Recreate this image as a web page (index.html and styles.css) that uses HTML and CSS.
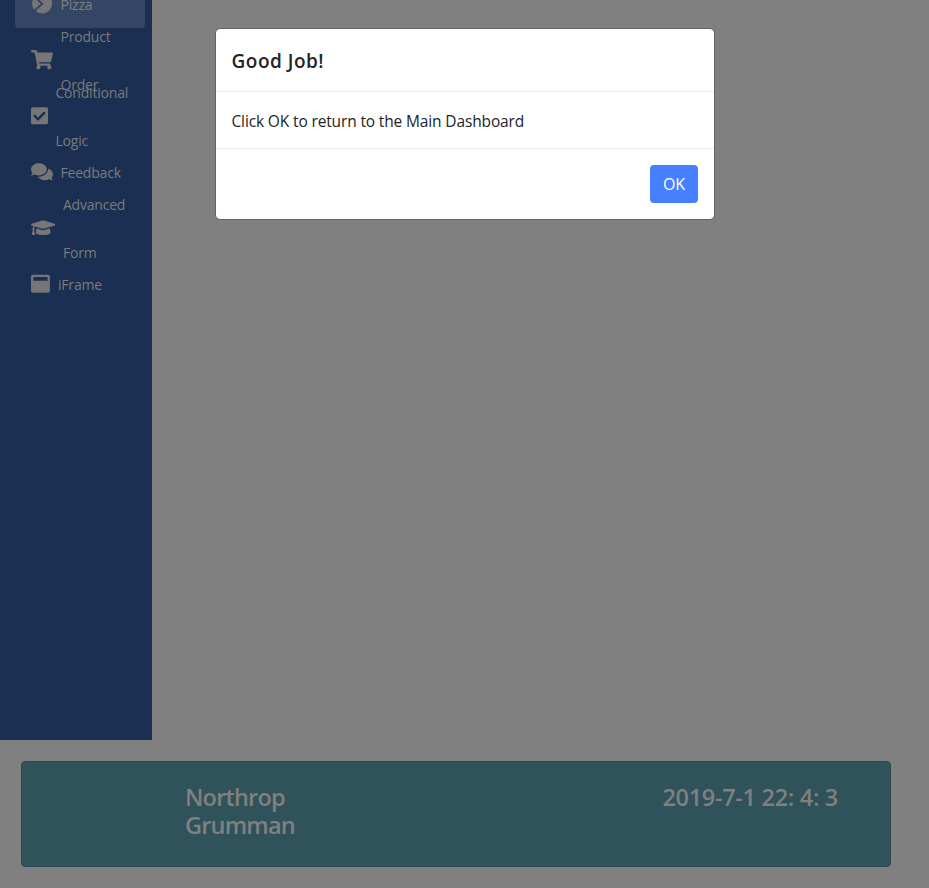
FILE: index.html
```html
<!DOCTYPE html>
<html lang="en">
<head>
<meta charset="utf-8">
<title>Dashboard</title>
<link rel="stylesheet" href="styles.css">
</head>
<body>
<nav class="sidebar">
  <a class="item active"><svg class="w-cart" viewBox="0 0 22 19.5"><path d="M4.800 2.400A9.800 9.800 0 1 1 4.800 17.100L12.500 9.750zM3.200 3.700L9.600 9.750L3.200 15.800A9.800 9.800 0 0 1 3.200 3.700z"/></svg><span>Pizza</span></a>
  <a class="item"><svg class="w-cart" viewBox="0 0 576 512"><path d="M528.12 301.319l47.273-208C578.806 78.301 567.391 64 551.99 64H159.208l-9.166-44.81C147.758 8.021 137.93 0 126.529 0H24C10.745 0 0 10.745 0 24v16c0 13.255 10.745 24 24 24h69.883l70.248 343.435C147.325 417.1 136 435.222 136 456c0 30.928 25.072 56 56 56s56-25.072 56-56c0-15.674-6.447-29.835-16.824-40h209.647C430.447 426.165 424 440.326 424 456c0 30.928 25.072 56 56 56s56-25.072 56-56c0-22.172-12.888-41.332-31.579-50.405l5.517-24.276c3.413-15.018-8.002-29.319-23.403-29.319H218.117l-6.545-32h293.145c11.206 0 20.92-7.754 23.403-18.681z"/></svg><span>Product<br>Order</span></a>
  <a class="item"><svg class="w-check" viewBox="0 0 448 512"><path d="M400 480H48c-26.51 0-48-21.49-48-48V80c0-26.51 21.49-48 48-48h352c26.51 0 48 21.49 48 48v352c0 26.51-21.49 48-48 48zm-204.686-98.059l184-184c6.248-6.248 6.248-16.379 0-22.627l-22.627-22.627c-6.248-6.248-16.379-6.249-22.628 0L184 302.745l-70.059-70.059c-6.248-6.248-16.379-6.248-22.628 0l-22.627 22.627c-6.248 6.248-6.248 16.379 0 22.627l104 104c6.249 6.249 16.379 6.249 22.628.001z"/></svg><span>Conditional<br>Logic</span></a>
  <a class="item"><svg class="w-cart" viewBox="0 0 576 512"><path d="M416 192c0-88.4-93.1-160-208-160S0 103.6 0 192c0 34.3 14.1 65.9 38 92-13.4 30.2-35.5 54.2-35.8 54.5-2.2 2.3-2.8 5.7-1.5 8.7S4.8 352 8 352c36.6 0 66.9-12.3 88.7-25 32.2 15.7 70.3 25 111.3 25 114.900 0 208-71.600 208-160zm122 220c23.900-26 38-57.700 38-92 0-66.900-53.500-124.200-129.300-148.100.9 6.600 1.300 13.300 1.300 20.100 0 105.900-107.700 192-240 192-10.800 0-21.300-.8-31.700-1.900C207.800 439.600 281.800 480 368 480c41 0 79.100-9.200 111.300-25 21.800 12.700 52.100 25 88.700 25 3.200 0 6.100-1.900 7.300-4.800 1.300-2.900.7-6.300-1.500-8.700-.3-.3-22.400-24.200-35.800-54.500z"/></svg><span>Feedback</span></a>
  <a class="item"><svg class="w-cap" viewBox="0 0 640 512"><path d="M622.34 153.2L343.4 67.5c-15.2-4.670-31.600-4.670-46.790 0L17.660 153.200c-23.540 7.230-23.540 38.360 0 45.590l48.630 14.940c-10.670 13.190-17.230 29.280-17.880 46.900C38.780 266.150 32 276.110 32 288c0 10.780 5.680 19.850 13.860 25.650L20.330 428.530C18.110 438.520 25.710 448 35.940 448h56.110c10.240 0 17.840-9.480 15.620-19.470L82.140 313.650C90.320 307.850 96 298.780 96 288c0-11.570-6.470-21.250-15.660-26.870.76-15.020 8.440-28.300 20.690-36.720L296.600 284.500c9.060 2.780 26.440 6.250 46.790 0l278.950-85.700c23.550-7.240 23.550-38.360 0-45.600zM352.790 315.090c-28.530 8.760-52.840 3.920-65.590 0l-145.020-44.550L128 384c0 35.350 85.960 64 192 64s192-28.650 192-64l-14.180-113.470-145.030 44.560z"/></svg><span>Advanced<br>Form</span></a>
  <a class="item"><svg class="w-frame" viewBox="0 0 512 512"><path fill-rule="evenodd" d="M48 20h400q48 0 48 48v376q0 48-48 48H48q-48 0-48-48V68q0-48 48-48zM60 80v98h376V80z"/></svg><span>iFrame</span></a>
</nav>
<footer class="banner">
  <h2 class="company">Northrop Grumman</h2>
  <h2 class="clock">2019-7-1 22: 4: 3</h2>
</footer>
<div class="backdrop">
  <section class="modal" role="dialog">
    <header><h5>Good Job!</h5></header>
    <div class="body"><span>Click OK to return to the Main Dashboard</span></div>
    <div class="actions"><button>OK</button></div>
  </section>
</div>
</body>
</html>
```

FILE: styles.css
```css
* { box-sizing: border-box; }
body { margin: 0; height: 888px; overflow: hidden; background: #808080; font-family: "Open Sans", sans-serif; }
.sidebar { width: 152px; height: 740px; overflow: hidden; background: #1a2f52; display: flex; flex-direction: column; gap: 8px; padding: 0 7px 0 15px; }
.item { height: 48px; flex: none; display: flex; align-items: center; gap: 8px; padding-left: 16px; border-radius: 4px; color: #7b7b7b; font-size: 14px; line-height: 48px; letter-spacing: -0.2px; white-space: nowrap; }
.active { margin-top: -20px; background: #344663; color: #808080; }
.item svg { height: 19.5px; flex: none; fill: #767676; }
.item span { position: relative; top: 1px; left: -0.5px; }
.w-cart { width: 22px; }
.w-check { width: 17px; }
.w-cap { width: 24.4px; }
.w-frame { width: 19.5px; }
.banner { width: 870px; height: 106px; margin: 21px 0 0 21px; padding: 21px 52px 0 163px; border: 1px solid #29484f; border-radius: 4px; background: #2f525b; color: #808080; display: flex; justify-content: space-between; }
.banner h2 { margin: 0; font-size: 23.5px; line-height: 28px; font-weight: 650; }
.banner .company { width: 140px; letter-spacing: -0.8px; }
.banner .clock { white-space: nowrap; letter-spacing: -0.3px; }
.backdrop { position: absolute; inset: 0; padding-top: 28px; }
.modal { width: 500px; height: 192px; margin: 0 auto 0 215px; border: 1px solid #666; border-radius: 5px; background: #fff; background-clip: padding-box; color: #212529; }
.modal header { height: 63px; padding: 17px 15.5px; border-bottom: 1px solid #e9ecef; }
.modal h5 { margin: 0; font-size: 19px; line-height: 30px; font-weight: 600; letter-spacing: 0.5px; }
.body { height: 57px; padding: 17px 15.5px 15px; border-bottom: 1px solid #e9ecef; font-size: 15.5px; line-height: 24px; letter-spacing: -0.14px; }
.actions { display: flex; justify-content: flex-end; padding: 16px; }
button { width: 48px; height: 38px; padding: 0; border: 0; border-radius: 4px; background: #467fff; color: #fff; font: 16px "Open Sans", sans-serif; }
```
